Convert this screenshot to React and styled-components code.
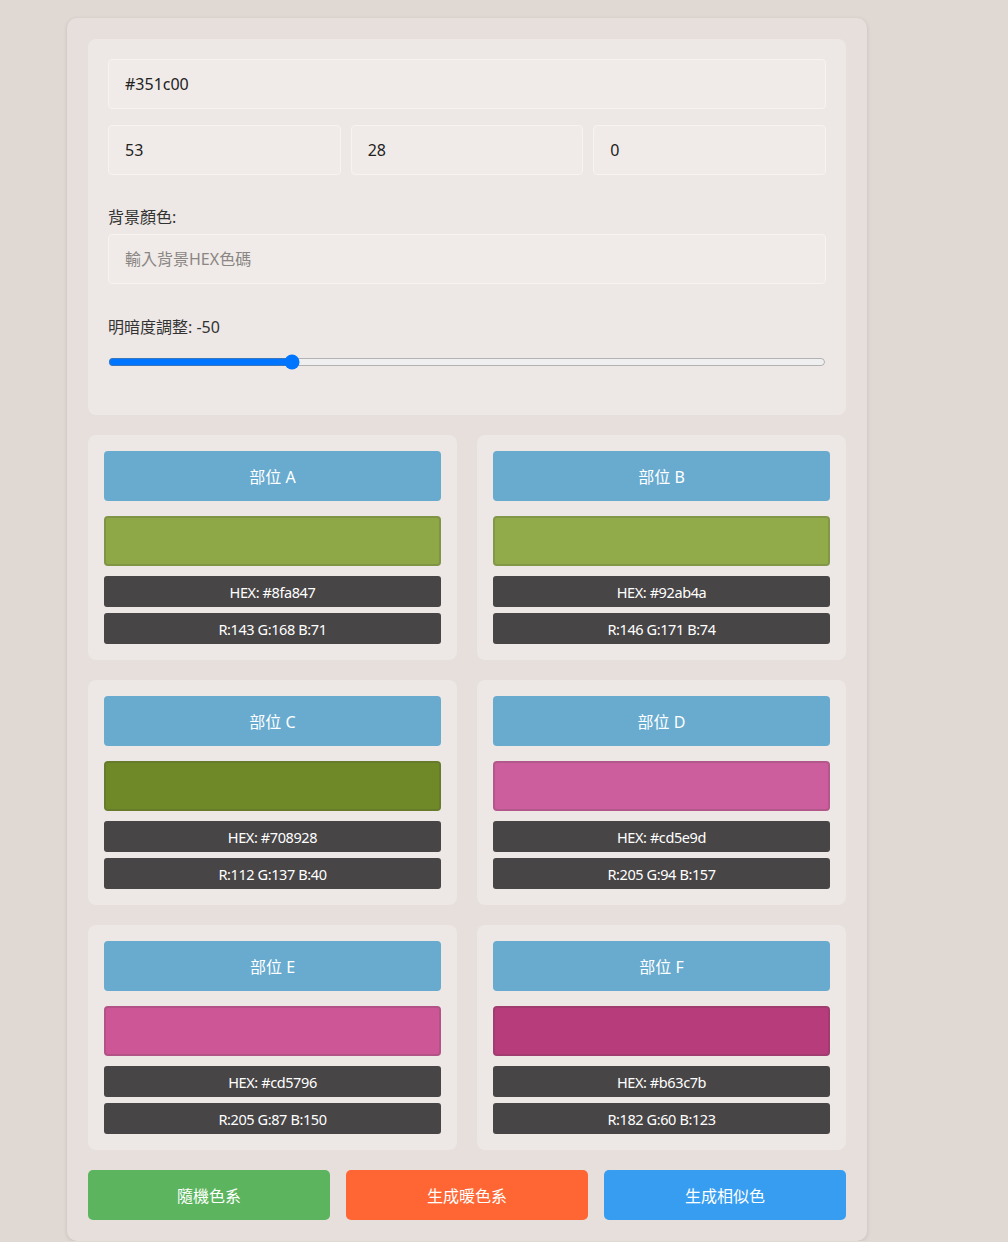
import styled, { createGlobalStyle } from 'styled-components';

const GlobalStyle = createGlobalStyle`
    body {
        margin: 0;
        background: #e0d8d3;
        font-family: "Noto Sans", "Noto Sans CJK TC", sans-serif;
    }
`

const Page = styled.div`
    padding: 18px 0 0 67px;
`
const Container = styled.div`
    width: 800px;
    box-sizing: border-box;
    padding: 21px;
    background: #e6dfdb;
    border-radius: 10px;
    box-shadow: 0 1px 4px rgba(0, 0, 0, 0.12);
    display: flex;
    flex-direction: column;
    gap: 20px;
`
const Panel = styled.div`
    background: #ede8e5;
    border-radius: 8px;
    padding: 20px 20px 45px;
    display: flex;
    flex-direction: column;
`
const Input = styled.input`
    box-sizing: border-box;
    width: 100%;
    height: 50px;
    padding: 0 16px;
    background: #f0ebe8;
    border: 1px solid #f6f3f1;
    border-radius: 4px;
    font-family: inherit;
    font-size: 16px;
    color: #222;
    outline: none;
    &::placeholder {
        color: #8a8684;
    }
`
const RgbRow = styled.div`
    display: grid;
    grid-template-columns: repeat(3, 1fr);
    gap: 10px;
    margin-top: 16px;
`
const Label = styled.div`
    font-size: 16px;
    line-height: 22px;
    color: #333;
    margin: ${(p) => p.$mt || 0}px 0 6px;
`
const Slider = styled.input`
    width: 100%;
    margin: 10px 0 0;
    accent-color: #0075ff;
`
const Grid = styled.div`
    display: grid;
    grid-template-columns: 1fr 1fr;
    gap: 20px;
`
const Card = styled.div`
    background: #ede8e5;
    border-radius: 8px;
    padding: 16px;
    display: flex;
    flex-direction: column;
`
const PartButton = styled.button`
    height: 50px;
    border: none;
    border-radius: 4px;
    background: #68abcf;
    color: #fff;
    font-family: inherit;
    font-size: 16px;
`
const Swatch = styled.div`
    height: 50px;
    margin: 15px 0 10px;
    box-sizing: border-box;
    border: 2px solid rgba(60, 60, 60, 0.18);
    border-radius: 4px;
`
const InfoBar = styled.div`
    height: 31px;
    border-radius: 3px;
    background: #474546;
    color: #fff;
    font-size: 14.5px;
    display: flex;
    align-items: center;
    justify-content: center;
    letter-spacing: -0.4px;
    & + & {
        margin-top: 6px;
    }
`
const ActionRow = styled.div`
    display: grid;
    grid-template-columns: repeat(3, 1fr);
    gap: 16px;
`
const ActionButton = styled.button`
    height: 50px;
    border: none;
    border-radius: 5px;
    background: ${(p) => p.$bg};
    color: #fff;
    font-family: inherit;
    font-size: 16px;
`

const parts = [
    { name: 'A', hex: '#8fa847' },
    { name: 'B', hex: '#92ab4a' },
    { name: 'C', hex: '#708928' },
    { name: 'D', hex: '#cd5e9d' },
    { name: 'E', hex: '#cd5796' },
    { name: 'F', hex: '#b63c7b' },
]

const toRgb = (hex) => {
    const n = parseInt(hex.slice(1), 16)
    return `R:${(n >> 16) & 255} G:${(n >> 8) & 255} B:${n & 255}`
}

const App = () => {
    return (
        <Page>
            <GlobalStyle />
            <Container>
                <Panel>
                    <Input defaultValue="#351c00" />
                    <RgbRow>
                        <Input defaultValue="53" />
                        <Input defaultValue="28" />
                        <Input defaultValue="0" />
                    </RgbRow>
                    <Label $mt={31}>背景顏色:</Label>
                    <Input placeholder="輸入背景HEX色碼" />
                    <Label $mt={32}>明暗度調整: -50</Label>
                    <Slider type="range" min="-100" max="100" defaultValue="-50" />
                </Panel>
                <Grid>
                    {parts.map((p) => (
                        <Card key={p.name}>
                            <PartButton>部位 {p.name}</PartButton>
                            <Swatch style={{ background: p.hex }} />
                            <InfoBar>HEX: {p.hex}</InfoBar>
                            <InfoBar>{toRgb(p.hex)}</InfoBar>
                        </Card>
                    ))}
                </Grid>
                <ActionRow>
                    <ActionButton $bg="#5cb55e">隨機色系</ActionButton>
                    <ActionButton $bg="#ff6633">生成暖色系</ActionButton>
                    <ActionButton $bg="#379df0">生成相似色</ActionButton>
                </ActionRow>
            </Container>
        </Page>
    )
}

export default App;
